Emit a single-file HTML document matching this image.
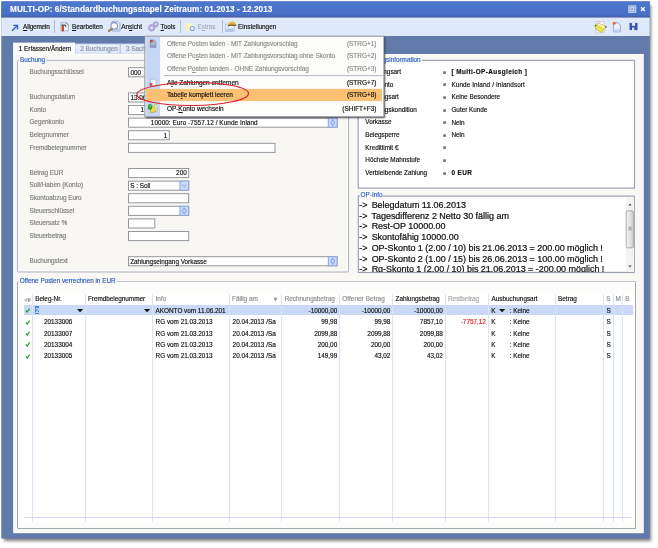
<!DOCTYPE html><html><head><meta charset="utf-8"><title>MULTI-OP</title><style>
html,body{margin:0;padding:0;background:#fff;}
body{width:658px;height:548px;position:relative;overflow:hidden;font-family:"Liberation Sans",sans-serif;}
.a{position:absolute;}
.t{position:absolute;font-size:6.4px;line-height:8px;white-space:pre;color:#111;letter-spacing:-0.02px;-webkit-text-stroke:0.15px;}
.g{color:#7d7d7d;}
.b{color:#2a5fc4;}
.in{position:absolute;background:#fff;border:1px solid #8c8f94;box-sizing:border-box;}
.btn{position:absolute;background:#c9d9fb;border:1px solid #8fa6d8;box-sizing:border-box;}
.vl{position:absolute;width:1px;background:#dae4f6;}
.sep{position:absolute;width:1px;background:#b4bccf;}
u{text-decoration:underline;text-decoration-thickness:0.6px;}
b{letter-spacing:0.42px;}
</style></head><body><div id="root" style="position:absolute;left:0;top:0;width:658px;height:548px;overflow:hidden;will-change:transform;transform:translateZ(0);">
<div class="a" style="left:2px;top:2px;width:647px;height:536px;background:#627aaa;box-shadow:2px 3px 3px rgba(0,0,0,.5);"></div>
<svg class="a" style="left:0;top:0" width="658" height="548" viewBox="0 0 658 548"><defs><linearGradient id="tg" x1="0" y1="0" x2="0" y2="1"><stop offset="0" stop-color="#4d76cd"/><stop offset="0.8" stop-color="#4870c6"/><stop offset="1" stop-color="#4467bb"/></linearGradient></defs><rect x="1.3" y="1.4" width="648.4" height="537.2" fill="#627aaa"/><rect x="1.3" y="1.4" width="648.4" height="16" fill="url(#tg)"/><rect x="1.3" y="15.8" width="648.4" height="1.8" fill="#4a63a8"/><rect x="1.3" y="17.6" width="648.4" height="18.4" fill="#deeafa"/><rect x="13.1" y="54.3" width="630.7" height="478.9" fill="#f9f8f5"/><rect x="13.1" y="54.1" width="630.7" height="0.9" fill="#ffffff"/></svg>
<div class="t" style="left:10.1px;top:4.6px;font-size:8.2px;line-height:10px;font-weight:bold;color:#fff;letter-spacing:0.08px;-webkit-text-stroke:0.1px;">MULTI-OP: 6/Standardbuchungsstapel Zeitraum: 01.2013 - 12.2013</div>
<svg class="a" style="left:627px;top:4px" width="22" height="10" viewBox="0 0 22 10"><rect x="1.8" y="1.9" width="7" height="6.4" fill="#7f9ad8" stroke="#dfe7fa" stroke-width="0.9"/><rect x="3.8" y="3.7" width="3" height="2.8" fill="none" stroke="#e8eefc" stroke-width="0.8"/><path d="M14 3.2 L17.8 7 M17.8 3.2 L14 7" stroke="#fff" stroke-width="1.3" fill="none"/></svg>
<svg class="a" style="left:11.4px;top:23.6px" width="8" height="8" viewBox="0 0 9 9"><path d="M1.2 7.6 L6.6 2.2 M2.6 1.6 H7.3 V6.3" stroke="#3a5cc6" stroke-width="1.5" fill="none"/></svg>
<div class="t " style="left:23.1px;top:23.35px;letter-spacing:-0.18px"><u>A</u>llgemein</div>
<div class="sep" style="left:54.3px;top:20px;height:13px"></div>
<div class="t " style="left:72px;top:23.35px;"><u>B</u>earbeiten</div>
<div class="t " style="left:121.3px;top:23.35px;">An<u>s</u>icht</div>
<div class="t " style="left:160.6px;top:23.35px;"><u>T</u>ools</div>
<div class="sep" style="left:180.4px;top:20px;height:13px"></div>
<div class="t " style="left:197.5px;top:23.35px;color:#a9aeb8">E<u>x</u>tras</div>
<div class="sep" style="left:221.6px;top:20px;height:13px"></div>
<div class="t " style="left:238.1px;top:23.35px;">Einstellungen</div>
<svg class="a" style="left:59px;top:21px" width="12" height="12" viewBox="0 0 12 12"><path d="M1.8 1.8 H7 L9.4 4.1 V9.8 H1.8 Z" fill="#eef3fc" stroke="#93a3c6" stroke-width="0.8"/><path d="M6.9 1.6 L9.5 4.1" stroke="#5c6c8c" stroke-width="0.9"/><path d="M2.7 4.6 H4.9 V9.6 A1.1 1.1 0 0 1 2.7 9.6 Z" fill="#c8401a"/><path d="M2.4 4.1 H5.6 Q6.9 4.1 6.9 5.8" stroke="#4a4a4a" stroke-width="1.2" fill="none"/></svg>
<svg class="a" style="left:106px;top:20px" width="16" height="13" viewBox="0 0 16 13"><path d="M6.2 1.3 H11.8 L14 3.5 V11 H6.2 Z" fill="#e3ecfa" stroke="#8ea4d0" stroke-width="0.9"/><path d="M6.6 8.6 H13.6 V10.7 H6.6 Z" fill="#bccdec"/><circle cx="8.2" cy="5.9" r="3.3" fill="#f4f7fd" stroke="#8796b8" stroke-width="1.1"/><circle cx="8.4" cy="5.8" r="1.7" fill="#fff"/><path d="M5.7 8.7 L2.9 10.9" stroke="#6a6248" stroke-width="2" stroke-linecap="round"/><path d="M5.6 8.5 L2.7 10.6" stroke="#b4a05a" stroke-width="1.3" stroke-linecap="round"/></svg>
<svg class="a" style="left:147px;top:20px" width="13" height="13" viewBox="0 0 13 13"><circle cx="8.8" cy="4.2" r="2.5" fill="#b9b1e0" stroke="#968ec8" stroke-width="0.8"/><circle cx="8.8" cy="4.2" r="0.9" fill="#e4e0f4"/><circle cx="4.6" cy="7.9" r="3.3" fill="#b9b1e0" stroke="#968ec8" stroke-width="0.9" stroke-dasharray="1.6 0.7"/><circle cx="4.6" cy="7.9" r="1.2" fill="#e4e0f4"/></svg>
<svg class="a" style="left:184px;top:21px" width="13" height="12" viewBox="0 0 13 12"><ellipse cx="5.2" cy="6" rx="3.9" ry="4.1" fill="#f8f1bd"/><circle cx="8.3" cy="7.5" r="2" fill="#f4f8fe" stroke="#7da4e4" stroke-width="1.1"/></svg>
<svg class="a" style="left:224px;top:20px" width="14" height="13" viewBox="0 0 14 13"><rect x="1.5" y="4.2" width="8.7" height="7.2" fill="#edf2fc" stroke="#a8bce4" stroke-width="0.8"/><rect x="2.2" y="8.6" width="7.3" height="2.3" fill="#a9c1ee"/><path d="M4.2 5.3 C4.4 2.6 6.4 1.5 8.2 1.6 C10.4 1.7 11.7 3.2 12 5.2 Z" fill="#e2ae2c"/><path d="M6 2.4 C7 1.8 8.6 1.8 9.6 2.6" stroke="#f4d66a" stroke-width="0.8" fill="none"/><path d="M3.6 6.4 L5.4 5.2 H12.3" stroke="#5a4418" stroke-width="1.1" fill="none"/></svg>
<svg class="a" style="left:593.5px;top:20.5px" width="14" height="13" viewBox="0 0 14 13"><rect x="1.9" y="0.8" width="8.2" height="11.1" fill="#f5f6f8" stroke="#b4b8c4" stroke-width="0.6"/><polygon points="0.9,4.7 4.4,2.2 12.6,5.7 7.3,11.5 2.1,8.3" fill="#e4da42" stroke="#a49c30" stroke-width="0.5"/><polygon points="4.7,2.7 11.9,5.7 10.1,7.5 3.3,4.1" fill="#f4f0c4"/><polygon points="2.7,6.1 8.3,8.7 7.1,10.3 2.5,7.7" fill="#f0e860"/><circle cx="1.6" cy="4.5" r="0.8" fill="#4a4a40"/><circle cx="11.8" cy="5.9" r="0.8" fill="#5a5a4c"/></svg>
<svg class="a" style="left:611.7px;top:21px" width="10" height="12" viewBox="0 0 10 12"><path d="M1.6 1.8 H6 L8.4 4.2 V10.8 H1.6 Z" fill="#edf3fc" stroke="#7d94c2" stroke-width="0.8"/><path d="M1.8 8 H8.2 V10.6 H1.8 Z" fill="#c6d8f4"/><circle cx="2.2" cy="2.2" r="1.5" fill="#ee6a2c"/></svg>
<svg class="a" style="left:629.2px;top:22px" width="10" height="9" viewBox="0 0 10 9"><path d="M0.5 0.9 H8.5 V8.1 H0.5 Z" fill="#3c50b2"/><rect x="2.9" y="0.9" width="3.2" height="2.9" fill="#e4eaf9"/><rect x="3" y="5.6" width="3" height="2.5" fill="#dfe6f8"/><rect x="4.9" y="6" width="0.9" height="1.8" fill="#3c50b2"/></svg>
<svg class="a" style="left:0;top:0" width="658" height="548" viewBox="0 0 658 548"><defs><linearGradient id="tb" x1="0" y1="0" x2="0" y2="1"><stop offset="0" stop-color="#eaf1fc"/><stop offset="1" stop-color="#dce7f9"/></linearGradient></defs><rect x="75" y="43.9" width="45.2" height="10.4" fill="url(#tb)" stroke="#a9c0e8" stroke-width="0.8"/><rect x="120.2" y="43.9" width="45" height="10.4" fill="url(#tb)" stroke="#a9c0e8" stroke-width="0.8"/><rect x="75" y="54" width="91" height="1" fill="#fdfdfc"/></svg>
<svg class="a" style="left:0;top:0" width="658" height="548" viewBox="0 0 658 548"><rect x="13.1" y="42.6" width="62" height="13" fill="#fbfbf9"/></svg>
<div class="t " style="left:18.8px;top:45.25px;">1 Erfassen/Ändern</div>
<div class="t " style="left:80.3px;top:45.25px;color:#8c929e">2 Buchungen</div>
<div class="t " style="left:126px;top:45.25px;color:#8c929e">3 Sachkonten</div>
<svg class="a" style="left:0;top:0" width="658" height="548" viewBox="0 0 658 548"><rect x="17.4" y="60.4" width="331.2" height="211.6" rx="1.2" fill="#f8f7f3" stroke="#a6acc0" stroke-width="0.9"/></svg>
<div class="t b" style="left:19px;top:55.5px;background:#f9f8f5;padding:0 1px;">Buchung</div>
<div class="t g" style="left:29.4px;top:68.05px;">Buchungsschlüssel</div>
<div class="t g" style="left:29.4px;top:93.25px;">Buchungsdatum</div>
<div class="t g" style="left:29.4px;top:105.85px;">Konto</div>
<div class="t g" style="left:29.4px;top:118.45px;">Gegenkonto</div>
<div class="t g" style="left:29.4px;top:131.05px;">Belegnummer</div>
<div class="t g" style="left:29.4px;top:143.65px;">Fremdbelegnummer</div>
<div class="t g" style="left:29.4px;top:168.85px;">Betrag EUR</div>
<div class="t g" style="left:29.4px;top:181.45px;">Soll/Haben (Konto)</div>
<div class="t g" style="left:29.4px;top:194.05px;">Skontoabzug Euro</div>
<div class="t g" style="left:29.4px;top:206.65px;">Steuerschlüssel</div>
<div class="t g" style="left:29.4px;top:219.25px;">Steuersatz %</div>
<div class="t g" style="left:29.4px;top:231.85px;">Steuerbetrag</div>
<div class="t g" style="left:29.4px;top:257.05px;">Buchungstext</div>
<svg class="a" style="left:0;top:0" width="658" height="548" viewBox="0 0 658 548"><rect x="128.5" y="67.70" width="61" height="9.1" fill="#fff" stroke="#93969d" stroke-width="1"/><rect x="128.5" y="92.90" width="61" height="9.1" fill="#fff" stroke="#93969d" stroke-width="1"/><rect x="128.5" y="105.50" width="61" height="9.1" fill="#fff" stroke="#93969d" stroke-width="1"/><rect x="128.5" y="118.10" width="208.60000000000002" height="9.1" fill="#fff" stroke="#93969d" stroke-width="1"/><rect x="328.3" y="118.10" width="8.8" height="9.1" fill="#c9d9fb" stroke="#8fa6d8" stroke-width="1"/><circle cx="332.70000000000005" cy="122.65" r="1.9" fill="#c4d5f8" stroke="#86a4e6" stroke-width="1"/><path d="M332.70000000000005 119.05 L334.00000000000006 120.45 H331.40000000000003 Z M332.70000000000005 126.25 L334.00000000000006 124.85 H331.40000000000003 Z" fill="#86a4e6"/><rect x="128.5" y="130.70" width="40.80000000000001" height="9.1" fill="#fff" stroke="#93969d" stroke-width="1"/><rect x="128.5" y="143.30" width="146.5" height="9.1" fill="#fff" stroke="#93969d" stroke-width="1"/><rect x="128.5" y="168.50" width="60.19999999999999" height="9.1" fill="#fff" stroke="#93969d" stroke-width="1"/><rect x="128.5" y="181.10" width="60.19999999999999" height="9.1" fill="#fff" stroke="#93969d" stroke-width="1"/><rect x="179.89999999999998" y="181.10" width="8.8" height="9.1" fill="#c9d9fb" stroke="#8fa6d8" stroke-width="1"/><path d="M182.39999999999998 184.75 L184.29999999999998 186.65 L186.2 184.75" stroke="#7f97cf" stroke-width="0.9" fill="none"/><rect x="128.5" y="193.70" width="60.19999999999999" height="9.1" fill="#fff" stroke="#93969d" stroke-width="1"/><rect x="128.5" y="206.30" width="60.19999999999999" height="9.1" fill="#fff" stroke="#93969d" stroke-width="1"/><rect x="179.89999999999998" y="206.30" width="8.8" height="9.1" fill="#c9d9fb" stroke="#8fa6d8" stroke-width="1"/><circle cx="184.29999999999998" cy="210.85" r="1.9" fill="#c4d5f8" stroke="#86a4e6" stroke-width="1"/><path d="M184.29999999999998 207.25 L185.6 208.65 H182.99999999999997 Z M184.29999999999998 214.45 L185.6 213.05 H182.99999999999997 Z" fill="#86a4e6"/><rect x="128.5" y="218.90" width="26.30000000000001" height="9.1" fill="#fff" stroke="#93969d" stroke-width="1"/><rect x="128.5" y="231.50" width="60.19999999999999" height="9.1" fill="#fff" stroke="#93969d" stroke-width="1"/><rect x="128.5" y="256.70" width="208.60000000000002" height="9.1" fill="#fff" stroke="#93969d" stroke-width="1"/><rect x="328.3" y="256.70" width="8.8" height="9.1" fill="#c9d9fb" stroke="#8fa6d8" stroke-width="1"/><circle cx="332.70000000000005" cy="261.25" r="1.9" fill="#c4d5f8" stroke="#86a4e6" stroke-width="1"/><path d="M332.70000000000005 257.65 L334.00000000000006 259.05 H331.40000000000003 Z M332.70000000000005 264.85 L334.00000000000006 263.45 H331.40000000000003 Z" fill="#86a4e6"/></svg>
<div class="t " style="left:130.5px;top:68.50px;">000</div>
<div class="t " style="left:130.5px;top:93.70px;">13.06.2013</div>
<div class="t " style="left:140.6px;top:106.30px;">1</div>
<div class="t " style="left:150.8px;top:118.90px;"><span style="letter-spacing:0.06px">10000: Euro -7557.12 / Kunde Inland</span></div>
<div class="t " style="right:490.7px;top:131.50px;">1</div>
<div class="t " style="right:471.3px;top:169.30px;">200</div>
<div class="t " style="left:130.2px;top:181.90px;">S : Soll</div>
<div class="t " style="left:130.2px;top:257.50px;">Zahlungseingang Vorkasse</div>
<svg class="a" style="left:0;top:0" width="658" height="548" viewBox="0 0 658 548"><rect x="358.2" y="60.3" width="276.3" height="127.8" fill="#fff" stroke="#979cae" stroke-width="1.1"/><rect x="358.3" y="196.1" width="276" height="76.3" fill="#fff" stroke="#979cae" stroke-width="1.1"/></svg>
<div class="t b" style="left:360px;top:55.5px;background:#f9f8f5;padding:0 1px;">Buchungsinformation</div>
<div class="t " style="left:365.3px;top:68.00px;">Buchungsart</div>
<svg class="a" style="left:442px;top:69.80px" width="5" height="5" viewBox="0 0 5 5"><rect x="1.3" y="1.3" width="2.6" height="2.6" fill="#707070"/></svg>
<div class="t " style="left:451.4px;top:68.10px;"><b>[ Multi-OP-Ausgleich ]</b></div>
<div class="t " style="left:365.3px;top:80.60px;">OP-Konto</div>
<svg class="a" style="left:442px;top:82.40px" width="5" height="5" viewBox="0 0 5 5"><rect x="1.3" y="1.3" width="2.6" height="2.6" fill="#707070"/></svg>
<div class="t " style="left:451.4px;top:80.70px;letter-spacing:0.1px">Kunde Inland / Inlandsort</div>
<div class="t " style="left:365.3px;top:93.20px;">Zahlungsart</div>
<svg class="a" style="left:442px;top:95.00px" width="5" height="5" viewBox="0 0 5 5"><rect x="1.3" y="1.3" width="2.6" height="2.6" fill="#707070"/></svg>
<div class="t " style="left:451.4px;top:93.30px;">Keine Besondere</div>
<div class="t " style="left:365.3px;top:105.80px;">Zahlungskondition</div>
<svg class="a" style="left:442px;top:107.60px" width="5" height="5" viewBox="0 0 5 5"><rect x="1.3" y="1.3" width="2.6" height="2.6" fill="#707070"/></svg>
<div class="t " style="left:451.4px;top:105.90px;">Guter Kunde</div>
<div class="t " style="left:365.3px;top:118.40px;">Vorkasse</div>
<svg class="a" style="left:442px;top:120.20px" width="5" height="5" viewBox="0 0 5 5"><rect x="1.3" y="1.3" width="2.6" height="2.6" fill="#707070"/></svg>
<div class="t " style="left:451.4px;top:118.50px;">Nein</div>
<div class="t " style="left:365.3px;top:131.00px;">Belegsperre</div>
<svg class="a" style="left:442px;top:132.80px" width="5" height="5" viewBox="0 0 5 5"><rect x="1.3" y="1.3" width="2.6" height="2.6" fill="#707070"/></svg>
<div class="t " style="left:451.4px;top:131.10px;">Nein</div>
<div class="t " style="left:365.3px;top:143.60px;">Kreditlimit €</div>
<svg class="a" style="left:442px;top:145.40px" width="5" height="5" viewBox="0 0 5 5"><rect x="1.3" y="1.3" width="2.6" height="2.6" fill="#707070"/></svg>
<div class="t " style="left:365.3px;top:156.20px;">Höchste Mahnstufe</div>
<svg class="a" style="left:442px;top:158.00px" width="5" height="5" viewBox="0 0 5 5"><rect x="1.3" y="1.3" width="2.6" height="2.6" fill="#707070"/></svg>
<div class="t " style="left:365.3px;top:168.80px;">Verbleibende Zahlung</div>
<svg class="a" style="left:442px;top:170.60px" width="5" height="5" viewBox="0 0 5 5"><rect x="1.3" y="1.3" width="2.6" height="2.6" fill="#707070"/></svg>
<div class="t " style="left:451.4px;top:168.90px;"><b>0 EUR</b></div>
<div class="t b" style="left:359.6px;top:190.5px;background:#f9f8f5;padding:0 1px;">OP-Info</div>
<div class="a" style="left:358.7px;top:196.6px;width:267px;height:75px;overflow:hidden;">
<div class="t" style="left:0.6px;top:3.40px;font-size:9px;line-height:11px;letter-spacing:-0.03px;-webkit-text-stroke:0.22px;"><span style="margin-right:1.7px">-&gt;</span> Belegdatum 11.06.2013</div>
<div class="t" style="left:0.6px;top:14.15px;font-size:9px;line-height:11px;letter-spacing:-0.03px;-webkit-text-stroke:0.22px;"><span style="margin-right:1.7px">-&gt;</span> Tagesdifferenz 2 Netto 30 fällig am</div>
<div class="t" style="left:0.6px;top:24.90px;font-size:9px;line-height:11px;letter-spacing:-0.03px;-webkit-text-stroke:0.22px;"><span style="margin-right:1.7px">-&gt;</span> Rest-OP 10000.00</div>
<div class="t" style="left:0.6px;top:35.65px;font-size:9px;line-height:11px;letter-spacing:-0.03px;-webkit-text-stroke:0.22px;"><span style="margin-right:1.7px">-&gt;</span> Skontofähig 10000.00</div>
<div class="t" style="left:0.6px;top:46.40px;font-size:9px;line-height:11px;letter-spacing:-0.03px;-webkit-text-stroke:0.22px;"><span style="margin-right:1.7px">-&gt;</span> OP-Skonto 1 (2.00 / 10) bis 21.06.2013 = 200.00 möglich !</div>
<div class="t" style="left:0.6px;top:57.15px;font-size:9px;line-height:11px;letter-spacing:-0.03px;-webkit-text-stroke:0.22px;"><span style="margin-right:1.7px">-&gt;</span> OP-Skonto 2 (1.00 / 15) bis 26.06.2013 = 100.00 möglich !</div>
<div class="t" style="left:0.6px;top:67.90px;font-size:9px;line-height:11px;letter-spacing:-0.03px;-webkit-text-stroke:0.22px;"><span style="margin-right:1.7px">-&gt;</span> Rg-Skonto 1 (2.00 / 10) bis 21.06.2013 = -200.00 möglich !</div>
</div>
<div class="a" style="left:625.8px;top:196.6px;width:8.1px;height:75px;background:#f3f3f1;"></div>
<svg class="a" style="left:0;top:0" width="658" height="548" viewBox="0 0 658 548"><defs><linearGradient id="sg" x1="0" y1="0" x2="1" y2="0"><stop offset="0" stop-color="#f6f6f6"/><stop offset="1" stop-color="#cfcfcf"/></linearGradient></defs><rect x="626.2" y="210.8" width="7.2" height="37" rx="1" fill="url(#sg)" stroke="#9c9c9c" stroke-width="0.8"/></svg>
<svg class="a" style="left:626px;top:197px" width="8" height="74" viewBox="0 0 8 74"><path d="M2.4 8.6 L4 6.6 L5.6 8.6 Z M2.4 68.6 L4 70.6 L5.6 68.6 Z" fill="#444"/><path d="M2.4 30.2 H5.6 M2.4 31.6 H5.6 M2.4 33 H5.6" stroke="#777" stroke-width="0.6"/></svg>
<div class="a" style="left:17.3px;top:281px;width:618.6px;height:248px;background:#fdfdfc;border:1px solid #a4a7ae;border-top-color:#c0c2c7;box-sizing:border-box;border-radius:1.5px;"></div>
<div class="t b" style="left:18.7px;top:276.5px;background:#f9f8f5;padding:0 1px;">Offene Posten verrechnen in EUR</div>
<div class="a" style="left:24px;top:293.5px;width:608.6px;height:228px;background:#fff;"></div>
<div class="a" style="left:24px;top:305.2px;width:608.6px;height:10.2px;background:#c9d9f7;"></div>
<div class="vl" style="left:32.1px;top:294px;height:227.5px"></div>
<div class="vl" style="left:84.5px;top:294px;height:227.5px"></div>
<div class="vl" style="left:152.0px;top:294px;height:227.5px"></div>
<div class="vl" style="left:228.7px;top:294px;height:227.5px"></div>
<div class="vl" style="left:281.1px;top:294px;height:227.5px"></div>
<div class="vl" style="left:339.2px;top:294px;height:227.5px"></div>
<div class="vl" style="left:392.2px;top:294px;height:227.5px"></div>
<div class="vl" style="left:444.5px;top:294px;height:227.5px"></div>
<div class="vl" style="left:488.2px;top:294px;height:227.5px"></div>
<div class="vl" style="left:555.1px;top:294px;height:227.5px"></div>
<div class="vl" style="left:603.3px;top:294px;height:227.5px"></div>
<div class="vl" style="left:612.9px;top:294px;height:227.5px"></div>
<div class="vl" style="left:622.1px;top:294px;height:227.5px"></div>
<div class="a" style="left:24.3px;top:516.9px;width:608px;height:1px;background:#cddaf2;"></div>
<div class="t " style="left:35.2px;top:295.35px;">Beleg-Nr.</div>
<div class="t " style="left:87.9px;top:295.35px;">Fremdbelegnummer</div>
<div class="t g" style="left:155.6px;top:295.35px;color:#8c8c8c">Info</div>
<div class="t g" style="left:232px;top:295.35px;color:#8c8c8c">Fällig am</div>
<svg class="a" style="left:273px;top:297.4px" width="5" height="5" viewBox="0 0 5 5"><path d="M0.4 0.8 H4.6 L2.5 4.4 Z" fill="#999"/></svg>
<div class="t g" style="left:284.7px;top:295.35px;color:#8c8c8c">Rechnungsbetrag</div>
<div class="t g" style="left:342.2px;top:295.35px;color:#8c8c8c;letter-spacing:0.06px">Offener Betrag</div>
<div class="t " style="left:395.5px;top:295.35px;">Zahlungsbetrag</div>
<div class="t g" style="left:448px;top:295.35px;color:#a5a5a5">Restbetrag</div>
<div class="t " style="left:491.6px;top:295.35px;">Ausbuchungsart</div>
<div class="t " style="left:558.1px;top:295.35px;">Betrag</div>
<div class="t g" style="left:606.3px;top:295.35px;color:#8c8c8c">S</div>
<div class="t g" style="left:615.6px;top:295.35px;color:#8c8c8c">M</div>
<div class="t g" style="left:625.2px;top:295.35px;color:#8c8c8c">B</div>
<svg class="a" style="left:24.3px;top:296.5px" width="7" height="6" viewBox="0 0 7 6"><path d="M0.6 2.4 L1.8 4.2 L3.2 1.2 M4.4 1.2 V4.8 M5.8 1.2 V4.8 M4.4 3 H5.8" stroke="#777" stroke-width="0.75" fill="none"/></svg>
<svg class="a" style="left:25.2px;top:308.30px" width="6" height="5" viewBox="0 0 6 5"><path d="M0.9 2.5 L2.2 4 L4.6 0.7" stroke="#279a27" stroke-width="1.15" fill="none"/></svg>
<div class="t " style="left:155.6px;top:306.85px;">AKONTO vom 11.06.201</div>
<div class="t " style="right:320.8px;top:306.85px;">-10000,00</div>
<div class="t " style="right:267.7px;top:306.85px;">-10000,00</div>
<div class="t " style="right:215.2px;top:306.85px;">-10000,00</div>
<div class="t " style="left:491.2px;top:306.85px;">K</div>
<div class="t " style="left:509.7px;top:306.85px;">: Keine</div>
<div class="t " style="left:606.4px;top:306.85px;">S</div>
<svg class="a" style="left:25.2px;top:319.50px" width="6" height="5" viewBox="0 0 6 5"><path d="M0.9 2.5 L2.2 4 L4.6 0.7" stroke="#279a27" stroke-width="1.15" fill="none"/></svg>
<div class="t " style="left:44px;top:318.05px;">20133006</div>
<div class="t " style="left:155.6px;top:318.05px;">RG vom 21.03.2013</div>
<div class="t " style="left:232.6px;top:318.05px;">20.04.2013 /Sa</div>
<div class="t " style="right:320.8px;top:318.05px;">99,98</div>
<div class="t " style="right:267.7px;top:318.05px;">99,98</div>
<div class="t " style="right:215.2px;top:318.05px;">7857,10</div>
<div class="t " style="right:172.2px;top:318.05px;color:#e02020">-7757,12</div>
<div class="t " style="left:491.2px;top:318.05px;">K</div>
<div class="t " style="left:509.7px;top:318.05px;">: Keine</div>
<div class="t " style="left:606.4px;top:318.05px;">S</div>
<svg class="a" style="left:25.2px;top:331.10px" width="6" height="5" viewBox="0 0 6 5"><path d="M0.9 2.5 L2.2 4 L4.6 0.7" stroke="#279a27" stroke-width="1.15" fill="none"/></svg>
<div class="t " style="left:44px;top:329.65px;">20133007</div>
<div class="t " style="left:155.6px;top:329.65px;">RG vom 21.03.2013</div>
<div class="t " style="left:232.6px;top:329.65px;">20.04.2013 /Sa</div>
<div class="t " style="right:320.8px;top:329.65px;">2099,88</div>
<div class="t " style="right:267.7px;top:329.65px;">2099,88</div>
<div class="t " style="right:215.2px;top:329.65px;">2099,88</div>
<div class="t " style="left:491.2px;top:329.65px;">K</div>
<div class="t " style="left:509.7px;top:329.65px;">: Keine</div>
<div class="t " style="left:606.4px;top:329.65px;">S</div>
<svg class="a" style="left:25.2px;top:342.30px" width="6" height="5" viewBox="0 0 6 5"><path d="M0.9 2.5 L2.2 4 L4.6 0.7" stroke="#279a27" stroke-width="1.15" fill="none"/></svg>
<div class="t " style="left:44px;top:340.85px;">20133004</div>
<div class="t " style="left:155.6px;top:340.85px;">RG vom 21.03.2013</div>
<div class="t " style="left:232.6px;top:340.85px;">20.04.2013 /Sa</div>
<div class="t " style="right:320.8px;top:340.85px;">200,00</div>
<div class="t " style="right:267.7px;top:340.85px;">200,00</div>
<div class="t " style="right:215.2px;top:340.85px;">200,00</div>
<div class="t " style="left:491.2px;top:340.85px;">K</div>
<div class="t " style="left:509.7px;top:340.85px;">: Keine</div>
<div class="t " style="left:606.4px;top:340.85px;">S</div>
<svg class="a" style="left:25.2px;top:353.80px" width="6" height="5" viewBox="0 0 6 5"><path d="M0.9 2.5 L2.2 4 L4.6 0.7" stroke="#279a27" stroke-width="1.15" fill="none"/></svg>
<div class="t " style="left:44px;top:352.35px;">20133005</div>
<div class="t " style="left:155.6px;top:352.35px;">RG vom 21.03.2013</div>
<div class="t " style="left:232.6px;top:352.35px;">20.04.2013 /Sa</div>
<div class="t " style="right:320.8px;top:352.35px;">149,99</div>
<div class="t " style="right:267.7px;top:352.35px;">43,02</div>
<div class="t " style="right:215.2px;top:352.35px;">43,02</div>
<div class="t " style="left:491.2px;top:352.35px;">K</div>
<div class="t " style="left:509.7px;top:352.35px;">: Keine</div>
<div class="t " style="left:606.4px;top:352.35px;">S</div>
<div class="a" style="left:35.2px;top:306.2px;width:4.2px;height:8.2px;background:#4a82de;"></div>
<div class="t " style="left:35.6px;top:306.95px;color:#fff">2</div>
<svg class="a" style="left:77.40px;top:309.10px" width="6.2" height="3.4" viewBox="0 0 6.2 3.4"><path d="M0 0 H6.2 L3.1 3.3 Z" fill="#111"/></svg>
<svg class="a" style="left:144.40px;top:309.10px" width="6.2" height="3.4" viewBox="0 0 6.2 3.4"><path d="M0 0 H6.2 L3.1 3.3 Z" fill="#111"/></svg>
<svg class="a" style="left:499.40px;top:309.10px" width="6.2" height="3.4" viewBox="0 0 6.2 3.4"><path d="M0 0 H6.2 L3.1 3.3 Z" fill="#111"/></svg>
<div class="a" style="left:145px;top:36px;width:239px;height:81px;background:#fbfbf9;box-shadow:1px 1px 1.6px rgba(0,0,0,.7);"></div>
<svg class="a" style="left:0;top:0" width="658" height="548" viewBox="0 0 658 548"><rect x="144.9" y="36.2" width="239" height="80.5" fill="#fcfcfa" stroke="#8a8e9c" stroke-width="1"/><rect x="146.1" y="37" width="14" height="79" fill="#c5d6f7"/><rect x="146.1" y="88.9" width="235.9" height="12.2" fill="#fbc074"/><rect x="164" y="75.2" width="219" height="0.9" fill="#a8aebb"/></svg>
<div class="t " style="left:166.9px;top:39.65px;color:#8c8c8c;font-size:6.5px;letter-spacing:-0.04px">Offene Posten laden - MIT Zahlungsvorschlag</div>
<div class="t " style="right:281.6px;top:39.65px;color:#8c8c8c;font-size:6.5px;letter-spacing:-0.04px">(STRG+1)</div>
<div class="t " style="left:166.9px;top:52.35px;color:#8c8c8c;font-size:6.5px;letter-spacing:-0.04px">Offene Po<u>s</u>ten laden - MIT Zahlungsvorschlag ohne Skonto</div>
<div class="t " style="right:281.6px;top:52.35px;color:#8c8c8c;font-size:6.5px;letter-spacing:-0.04px">(STRG+2)</div>
<div class="t " style="left:166.9px;top:65.05px;color:#8c8c8c;font-size:6.5px;letter-spacing:-0.04px">Offene P<u>o</u>sten landen - OHNE Zahlungsvorschlag</div>
<div class="t " style="right:281.6px;top:65.05px;color:#8c8c8c;font-size:6.5px;letter-spacing:-0.04px">(STRG+3)</div>
<div class="t " style="left:166.9px;top:78.85px;color:#111;font-size:6.5px;letter-spacing:-0.04px">A<u>l</u>le Zahlungen entfernen</div>
<div class="t " style="right:281.6px;top:78.85px;color:#111;font-size:6.5px;letter-spacing:-0.04px">(STRG+7)</div>
<div class="t " style="left:166.9px;top:91.35px;color:#111;font-size:6.5px;letter-spacing:-0.04px">Tabe<u>l</u>le komplett leeren</div>
<div class="t " style="right:281.6px;top:91.35px;color:#111;font-size:6.5px;letter-spacing:-0.04px">(STRG+8)</div>
<div class="t " style="left:166.9px;top:105.25px;color:#111;font-size:6.5px;letter-spacing:-0.04px">OP-<u>K</u>onto wechseln</div>
<div class="t " style="right:281.6px;top:105.25px;color:#111;font-size:6.5px;letter-spacing:-0.04px">(SHIFT+F3)</div>
<svg class="a" style="left:149px;top:39px" width="8" height="10" viewBox="0 0 8 10"><path d="M1.3 1.1 H5.2 L6.9 2.8 V8.6 H1.3 Z" fill="#a9b5c9" stroke="#7f8da6" stroke-width="0.7"/><path d="M1.6 6 H6.6 V8.3 H1.6 Z" fill="#8e9db8"/><path d="M1 0.9 H3.6 V3.3 H1 Z" fill="#b4503c"/></svg>
<svg class="a" style="left:148.5px;top:77.5px" width="9" height="10" viewBox="0 0 9 10"><path d="M1.5 1 H5.2 L7.2 3 V8 H1.5 Z" fill="#f6f8fc" stroke="#9aa6c0" stroke-width="0.7"/><path d="M0.7 5 L3.3 7.8 M3.3 5 L0.7 7.8" stroke="#dc3220" stroke-width="1.1"/></svg>
<svg class="a" style="left:147px;top:103px" width="12" height="11" viewBox="0 0 12 11"><path d="M5.4 2.4 L9.6 1.5 L10.2 8 L6 9.4 Z" fill="#f6ebbc" stroke="#b4a660" stroke-width="0.5"/><path d="M2.9 4.7 L7.6 3.5 L8.5 8.6 L3.7 9.7 Z" fill="#f0e244" stroke="#a89c28" stroke-width="0.5"/><ellipse cx="3" cy="3.9" rx="2.1" ry="2.9" fill="#2a9c30"/><ellipse cx="3.3" cy="3" rx="0.9" ry="1.2" fill="#58d058"/></svg>
<svg class="a" style="left:134px;top:79px" width="120" height="31" viewBox="0 0 120 31"><ellipse cx="58.7" cy="15" rx="55.8" ry="11.5" fill="none" stroke="#d8222c" stroke-width="1.2" transform="rotate(-0.5 58.7 15)"/></svg>
</div></body></html>
